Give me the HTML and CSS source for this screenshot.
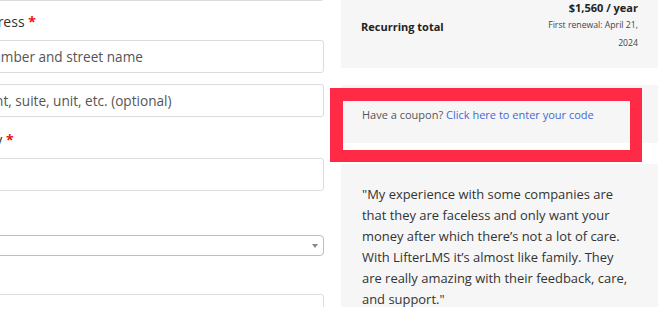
FILE: index.html
```html
<!DOCTYPE html>
<html lang="en">
<head>
<meta charset="utf-8">
<title>Checkout</title>
<link rel="stylesheet" href="styles.css">
</head>
<body>
<div class="page">
  <div class="form">
    <input class="input input-first" type="text" aria-label="Company name">
    <label class="label label-street">Street address <span class="req">*</span></label>
    <input class="input" type="text" placeholder="House number and street name">
    <input class="input input-second" type="text" placeholder="Apartment, suite, unit, etc. (optional)">
    <label class="label label-city">Town / City <span class="req">*</span></label>
    <input class="input" type="text" aria-label="Town / City">
    <div class="select select-state" aria-label="State"><span class="select-arrow"></span></div>
    <input class="input input-zip" type="text" aria-label="ZIP Code">
  </div>
  <div class="side">
    <div class="box totals">
      <div class="totals-label">Recurring total</div>
      <div class="totals-value">
        <div class="price">$1,560 / year</div>
        <div class="renewal">First renewal: April 21, 2024</div>
      </div>
    </div>
    <div class="box coupon">
      Have a coupon? <a href="#" class="coupon-link">Click here to enter your code</a>
    </div>
    <div class="box quote">
      "My experience with some companies are that they are faceless and only want your money after which there’s not a lot of care. With LifterLMS it’s almost like family. They are really amazing with their feedback, care, and support."
    </div>
  </div>
  <div class="highlight"></div>
</div>
</body>
</html>
```

FILE: styles.css
```css
* { box-sizing: border-box; }

html, body {
  margin: 0;
  padding: 0;
  background: #fff;
  overflow: hidden;
}

body {
  width: 671px;
  height: 329px;
  font-family: "Open Sans", "Noto Sans", sans-serif;
  color: #333;
}

.page {
  position: relative;
  display: flex;
  align-items: flex-start;
  gap: 17px;
  width: 671px;
  height: 307px;
  overflow: hidden;
}

.form {
  flex: none;
  width: 394px;
  margin-left: -70px;
  margin-top: -32px;
  display: flex;
  flex-direction: column;
}

.input {
  display: block;
  width: 100%;
  height: 33px;
  margin: 0;
  padding: 0 9px;
  border: 1px solid #dcdcdc;
  border-radius: 3px;
  background: #fff;
  font-family: inherit;
  font-size: 13.6px;
  color: #444;
  outline: none;
}

.input::placeholder { color: #555; opacity: 1; }

.input-second { margin-top: 11px; }

.label {
  display: block;
  font-size: 14px;
  line-height: 20px;
  color: #333;
  white-space: nowrap;
}

.label-street { margin: 11px 0 8px; }
.label-city { margin: 13px 0 8px; }

.req { color: #ee1111; font-weight: 700; }

.select {
  position: relative;
  height: 21px;
  border: 1px solid #bdbdbd;
  border-radius: 4px;
  background: #fff;
}

.select-state { margin-top: 44px; }

.select-arrow {
  position: absolute;
  right: 5px;
  top: 8px;
  width: 0;
  height: 0;
  border-left: 3px solid transparent;
  border-right: 3px solid transparent;
  border-top: 4px solid #888;
}

.input-zip { margin-top: 38px; }

.side {
  flex: none;
  width: 317px;
  margin-top: -16px;
  display: flex;
  flex-direction: column;
}

.box { background: #f6f6f6; }

.totals {
  display: flex;
  align-items: center;
  justify-content: space-between;
  padding: 16px 20px 16px 20px;
}

.totals-label {
  font-size: 11px;
  font-weight: 700;
  color: #222;
}

.totals-value {
  width: 100px;
  text-align: right;
}

.price {
  font-size: 11px;
  font-weight: 700;
  line-height: 16px;
  color: #222;
}

.renewal {
  font-size: 8.7px;
  line-height: 18px;
  color: #444;
}

.coupon {
  margin-top: 17px;
  height: 58px;
  padding: 22px 21px 0;
  font-size: 11px;
  line-height: 16px;
  color: #555;
}

.coupon-link {
  color: #4169d6;
  text-decoration: none;
}

.quote {
  margin-top: 21px;
  height: 143px;
  overflow: hidden;
  padding: 20px 27px 0 21px;
  font-size: 12.95px;
  line-height: 21px;
  color: #333;
}

.highlight {
  position: absolute;
  left: 330px;
  top: 88px;
  width: 312px;
  height: 74px;
  border-style: solid;
  border-color: #ff2b46;
  border-width: 13px 12px 12px 13px;
  pointer-events: none;
}
```
